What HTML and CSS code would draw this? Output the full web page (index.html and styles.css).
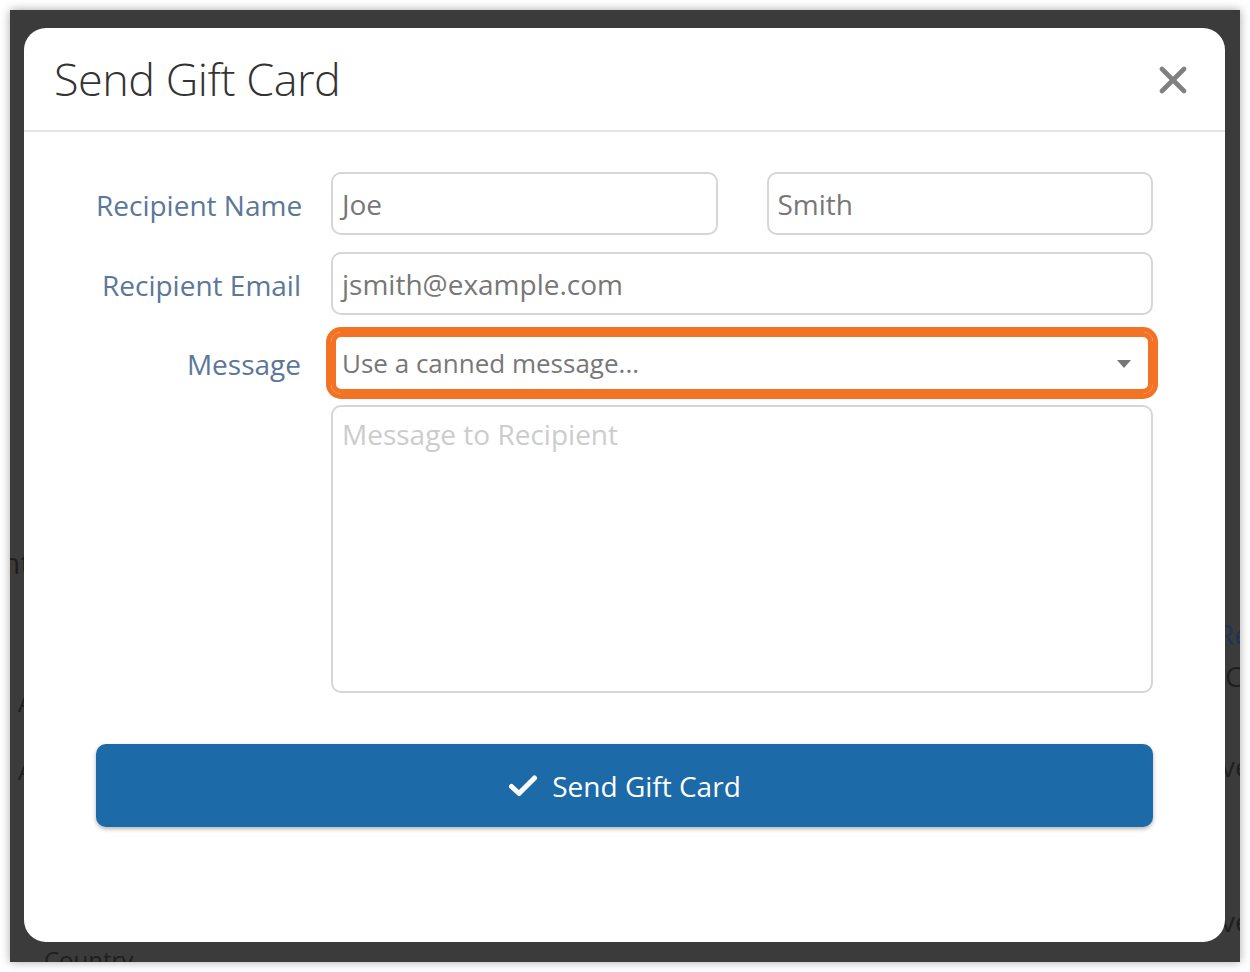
FILE: index.html
```html
<!DOCTYPE html>
<html lang="en">
<head>
<meta charset="utf-8">
<title>Send Gift Card</title>
<link rel="stylesheet" href="styles.css">
</head>
<body>
<div class="screen">
  <div class="page-behind">
    <span class="ghost g1">nt</span>
    <span class="ghost g2">A</span>
    <span class="ghost g3">A</span>
    <span class="ghost g4">Country</span>
    <span class="ghost g5 blue">Re</span>
    <span class="ghost g6">C</span>
    <span class="ghost g7">ve</span>
    <span class="ghost g8">ve</span>
  </div>
  <div class="modal">
    <div class="modal-header">
      <h1 class="modal-title">Send Gift Card</h1>
      <button class="close" aria-label="Close">
        <svg width="28" height="28" viewBox="0 0 28 28"><path d="M3 3 L25 25 M25 3 L3 25" stroke="#808080" stroke-width="4.6" stroke-linecap="round" fill="none"/></svg>
      </button>
    </div>
    <div class="modal-body">
      <div class="form-row">
        <label class="label">Recipient Name</label>
        <div class="split">
          <div class="input">Joe</div>
          <div class="input">Smith</div>
        </div>
      </div>
      <div class="form-row">
        <label class="label">Recipient Email</label>
        <div class="input">jsmith@example.com</div>
      </div>
      <div class="form-row row-select">
        <label class="label">Message</label>
        <div class="select">
          <span>Use a canned message...</span>
          <span class="caret"></span>
        </div>
      </div>
      <div class="form-row row-textarea">
        <span class="label"></span>
        <div class="textarea"><span class="placeholder">Message to Recipient</span></div>
      </div>
      <button class="btn-send">
        <svg width="30" height="24" viewBox="0 0 30 24"><path d="M3.5 12.5 L11 19.5 L26.5 4" stroke="#fff" stroke-width="5" stroke-linecap="round" stroke-linejoin="round" fill="none"/></svg>
        <span>Send Gift Card</span>
      </button>
    </div>
  </div>
</div>
</body>
</html>
```

FILE: styles.css
```css
* { box-sizing: border-box; }
html, body { margin: 0; padding: 0; background: #ffffff; }
body {
  width: 1250px;
  height: 972px;
  padding: 10px;
  font-family: "Open Sans", "Noto Sans", sans-serif;
}
.screen {
  position: relative;
  width: 1230px;
  height: 952px;
  background: #3b3b3b;
  box-shadow: 0 0 9px rgba(0, 0, 0, 0.35);
  overflow: hidden;
}
.page-behind {
  position: absolute;
  inset: 0;
}
.ghost {
  position: absolute;
  color: #1f1f1f;
  font-size: 28px;
  line-height: 1;
  white-space: nowrap;
}
.ghost.blue { color: #1d3653; }
.g1 { left: -8px; top: 538px; font-size: 30px; }
.g2 { left: 8px; top: 681px; font-size: 24px; }
.g3 { left: 8px; top: 749px; font-size: 24px; }
.g4 { left: 34px; top: 938px; font-size: 24px; }
.g5 { left: 1207px; top: 610px; }
.g6 { left: 1215px; top: 652px; }
.g7 { left: 1211px; top: 742px; }
.g8 { left: 1211px; top: 897px; }

.modal {
  position: absolute;
  left: 14px;
  top: 18px;
  width: 1201px;
  height: 914px;
  background: #ffffff;
  border-radius: 22px;
  display: flex;
  flex-direction: column;
}
.modal-header {
  height: 104px;
  border-bottom: 2px solid #e5e5e5;
  display: flex;
  align-items: center;
  justify-content: space-between;
  padding: 0 38px 0 30px;
}
.modal-title {
  margin: 0;
  font-weight: 300;
  font-size: 45px;
  color: #333333;
  letter-spacing: -0.5px;
  padding-bottom: 2px;
}
.close {
  border: 0;
  background: none;
  padding: 0;
  width: 28px;
  height: 28px;
  display: flex;
  margin-top: 2px;
}
.modal-body {
  padding: 40px 72px 0 72px;
  display: flex;
  flex-direction: column;
}
.form-row {
  display: grid;
  grid-template-columns: 205px 1fr;
  column-gap: 30px;
  align-items: center;
  margin-bottom: 17px;
}
.row-select { margin-bottom: 11px; }
.row-textarea { margin-bottom: 52px; align-items: start; }
.label {
  text-align: right;
  font-size: 28px;
  color: #5b7799;
  padding-top: 2px;
  white-space: nowrap;
}
.split {
  display: grid;
  grid-template-columns: 1fr 1fr;
  column-gap: 49px;
}
.input {
  height: 63px;
  border: 2px solid #d6d6d6;
  border-radius: 10px;
  padding: 0 9px;
  display: flex;
  align-items: center;
  font-size: 28px;
  color: #777777;
}
.select {
  height: 62px;
  border: 5px solid #f37224;
  border-radius: 10px;
  box-shadow: 0 0 0 5px #f37224;
  display: flex;
  align-items: center;
  justify-content: space-between;
  padding: 0 17px 0 6px;
  font-size: 26px;
  color: #777777;
}
.caret {
  width: 0;
  height: 0;
  border-left: 7px solid transparent;
  border-right: 7px solid transparent;
  border-top: 8px solid #777777;
  margin-top: 2px;
}
.textarea {
  height: 288px;
  border: 2px solid #d6d6d6;
  border-radius: 10px;
  padding: 7px 9px;
  font-size: 28px;
  line-height: 40px;
}
.placeholder { color: #cccccc; }
.btn-send {
  height: 83px;
  width: 100%;
  border: 0;
  border-radius: 10px;
  background: #1c6aa8;
  box-shadow: 0 2px 4px rgba(0, 0, 0, 0.3);
  color: #ffffff;
  font-family: "Open Sans", "Noto Sans", sans-serif;
  font-size: 28px;
  display: flex;
  align-items: center;
  justify-content: center;
  gap: 14px;
  padding: 0;
  margin-top: -1px;
}
.btn-send svg { margin-top: 1px; }
```
